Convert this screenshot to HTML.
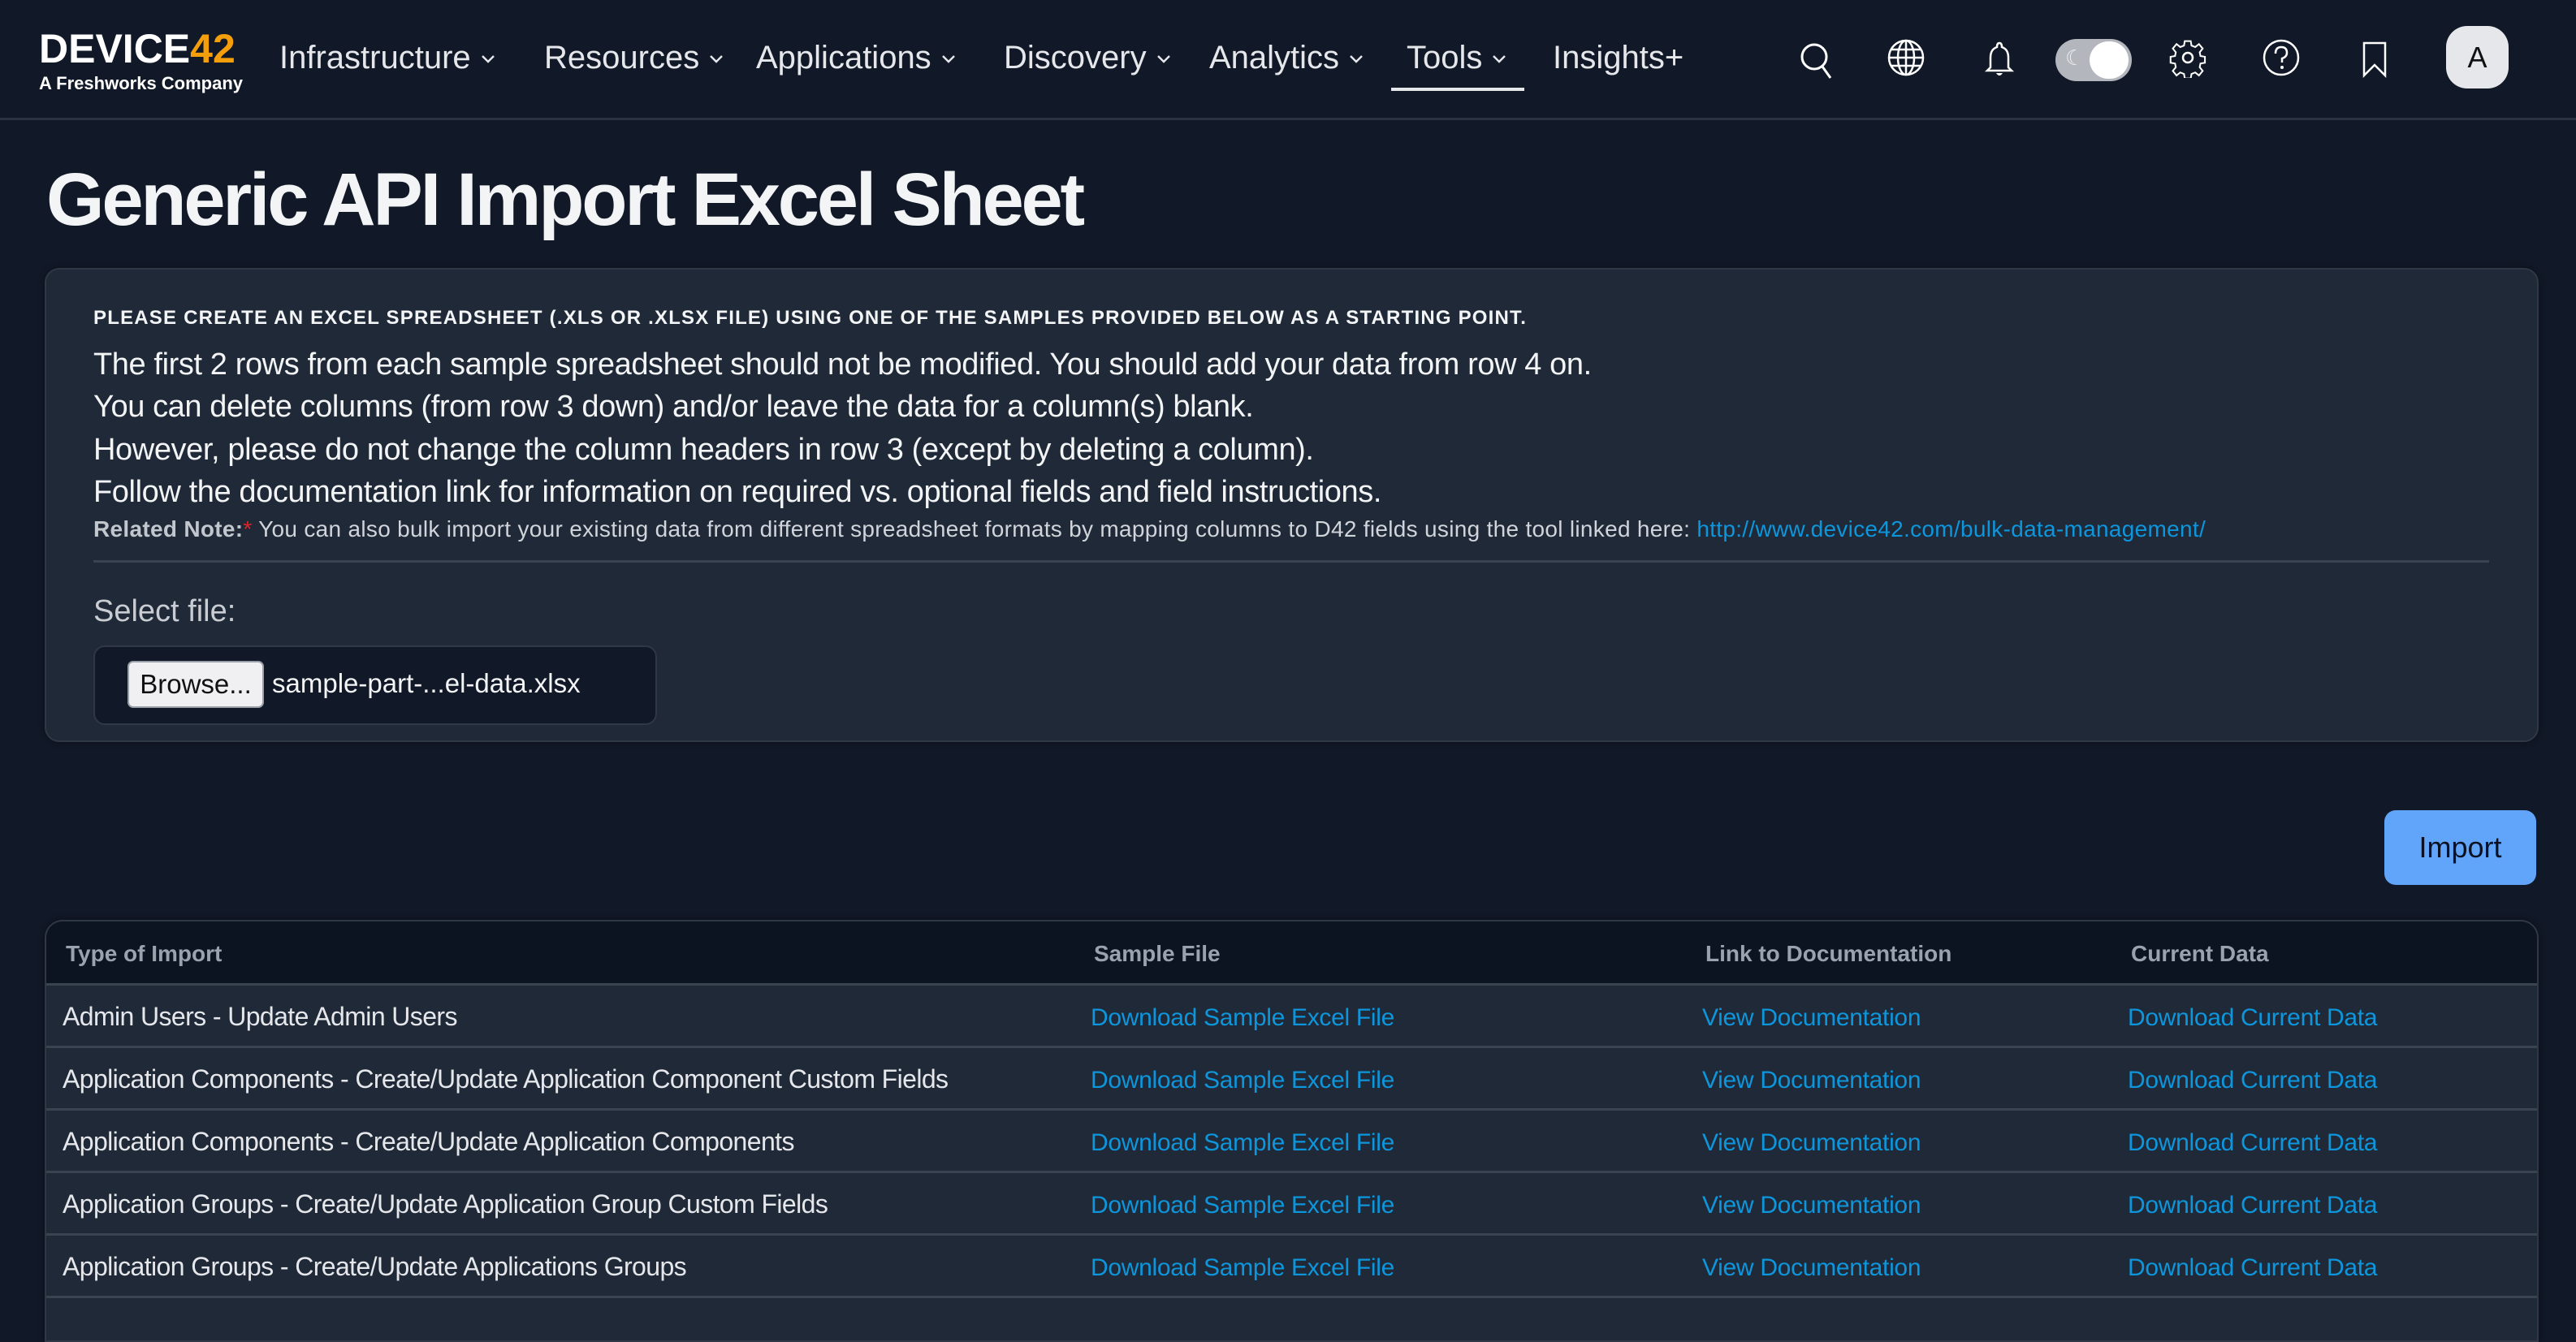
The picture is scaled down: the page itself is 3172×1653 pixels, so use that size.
<!DOCTYPE html>
<html><head><meta charset="utf-8"><style>
*{margin:0;padding:0;box-sizing:border-box}
body{width:3172px;height:1604px;overflow:hidden;background:#111827;font-family:"Liberation Sans",sans-serif;color:#e5e7eb;position:relative}
.a{position:absolute;white-space:nowrap}
.nav{position:absolute;left:0;top:0;width:3172px;height:148px;background:#111827;border-bottom:3px solid #2b3340}
.ni{position:absolute;top:46px;font-size:40px;color:#e5e7eb;line-height:50px}
.ni svg{margin-left:12px;vertical-align:middle}
.ic{position:absolute;top:46px}
.panel{position:absolute;left:55px;top:330px;width:3071px;height:584px;background:#1f2937;border:2px solid #2f3846;border-radius:18px;box-shadow:0 0 8px rgba(0,0,0,.4)}
.p{font-size:38px;color:#f3f4f6;letter-spacing:-0.4px}
a{color:#0e96dc;text-decoration:none}
.tbl{position:absolute;left:55px;top:1133px;width:3071px;height:520px;background:#1f2937;border:2px solid #2f3846;border-radius:22px 22px 0 0;overflow:hidden;box-shadow:0 0 8px rgba(0,0,0,.4)}
.hd{position:absolute;left:0;top:0;width:100%;height:79px;background:#0c1422;border-bottom:3px solid #3a4350}
.th{position:absolute;top:24px;font-size:28px;font-weight:bold;color:#9aa3ad}
.row{position:absolute;left:0;width:100%;height:77px;border-bottom:3px solid #3a4350}
.row span{position:absolute;top:20px;font-size:32px;white-space:nowrap;letter-spacing:-0.6px}
.row span a{font-size:30px;letter-spacing:-0.3px}
</style></head><body>
<div class="nav">
 <div class="a" style="left:48px;top:32px;font-size:50px;font-weight:bold;letter-spacing:0;color:#fff;line-height:56px">DEVICE<span style="color:#f59e0b">42</span></div>
 <div class="a" style="left:48px;top:90px;font-size:22px;font-weight:bold;color:#fff">A Freshworks Company</div>
 <div class="ni" style="left:344px">Infrastructure<svg width="18" height="12"><path d="M2 2l7 7 7-7" stroke="#e5e7eb" stroke-width="2.5" fill="none"/></svg></div>
 <div class="ni" style="left:670px">Resources<svg width="18" height="12"><path d="M2 2l7 7 7-7" stroke="#e5e7eb" stroke-width="2.5" fill="none"/></svg></div>
 <div class="ni" style="left:931px">Applications<svg width="18" height="12"><path d="M2 2l7 7 7-7" stroke="#e5e7eb" stroke-width="2.5" fill="none"/></svg></div>
 <div class="ni" style="left:1236px">Discovery<svg width="18" height="12"><path d="M2 2l7 7 7-7" stroke="#e5e7eb" stroke-width="2.5" fill="none"/></svg></div>
 <div class="ni" style="left:1489px">Analytics<svg width="18" height="12"><path d="M2 2l7 7 7-7" stroke="#e5e7eb" stroke-width="2.5" fill="none"/></svg></div>
 <div class="ni" style="left:1732px">Tools<svg width="18" height="12"><path d="M2 2l7 7 7-7" stroke="#e5e7eb" stroke-width="2.5" fill="none"/></svg></div>
 <div class="a" style="left:1713px;top:108px;width:164px;height:4px;background:#e5e7eb"></div>
 <div class="ni" style="left:1912px">Insights+</div>
 <svg class="ic" style="left:2212px" width="50" height="56" viewBox="0 0 50 56"><circle cx="22" cy="24" r="15" stroke="#fff" stroke-width="3" fill="none"/><path d="M32 36l10 14" stroke="#fff" stroke-width="3"/></svg>
 <svg class="ic" style="left:2322px" width="50" height="50" viewBox="0 0 50 50"><circle cx="25" cy="25" r="21" stroke="#fff" stroke-width="2.5" fill="none"/><ellipse cx="25" cy="25" rx="10" ry="21" stroke="#fff" stroke-width="2.5" fill="none"/><path d="M25 4v42M4 25h42M7 15h36M7 35h36" stroke="#fff" stroke-width="2.5"/></svg>
 <svg class="ic" style="left:2440px;top:50px" width="44" height="48" viewBox="0 0 44 48"><path d="M22 3c-3 0-3 4-3 5-6 2-8 7-8 13v12l-4 4h30l-4-4V21c0-6-2-11-8-13 0-1 0-5-3-5z" stroke="#fff" stroke-width="2.5" fill="none"/><path d="M18 40q4 6 8 0" fill="#fff"/></svg>
 <div class="a" style="left:2531px;top:48px;width:94px;height:52px;border-radius:26px;background:#b3b7bd"><div class="a" style="left:42px;top:3px;width:48px;height:46px;border-radius:24px;background:#fff"></div><div class="a" style="left:12px;top:8px;font-size:26px;color:#eee">☾</div></div>
 <svg class="ic" style="left:2670px" width="48" height="50" viewBox="0 0 48 50"><path d="M20 4h8l1 6 5 2 5-4 5 6-4 5 1 5 6 1v8l-6 1-1 5 4 5-5 6-5-4-5 2-1 6h-8l-1-6-5-2-5 4-5-6 4-5-1-5-6-1v-8l6-1 1-5-4-5 5-6 5 4 5-2z" stroke="#fff" stroke-width="2.2" fill="none" transform="scale(.92) translate(2 1)"/><circle cx="24" cy="25" r="6" stroke="#fff" stroke-width="2.5" fill="none"/></svg>
 <svg class="ic" style="left:2785px" width="48" height="50" viewBox="0 0 48 50"><circle cx="24" cy="25" r="21" stroke="#fff" stroke-width="2.5" fill="none"/><path d="M17 20q0-8 7-8t7 7q0 5-6 7v5" stroke="#fff" stroke-width="2.5" fill="none"/><circle cx="25" cy="37" r="2" fill="#fff"/></svg>
 <svg class="ic" style="left:2908px;top:50px" width="32" height="46" viewBox="0 0 32 46"><path d="M3 3h26v40L16 30 3 43z" stroke="#fff" stroke-width="2.5" fill="none"/></svg>
 <div class="a" style="left:3012px;top:32px;width:77px;height:77px;border-radius:26px;background:#e5e7eb;color:#111;font-size:36px;text-align:center;line-height:77px">A</div>
</div>

<div class="a" style="left:57px;top:194px;font-size:92px;font-weight:bold;color:#f3f4f6;letter-spacing:-3.2px">Generic API Import Excel Sheet</div>

<div class="panel">
 <div class="a" style="left:58px;top:46px;font-size:24px;font-weight:bold;letter-spacing:1.2px;color:#f3f4f6">PLEASE CREATE AN EXCEL SPREADSHEET (.XLS OR .XLSX FILE) USING ONE OF THE SAMPLES PROVIDED BELOW AS A STARTING POINT.</div>
 <div class="a p" style="left:58px;top:96px">The first 2 rows from each sample spreadsheet should not be modified. You should add your data from row 4 on.</div>
 <div class="a p" style="left:58px;top:148px">You can delete columns (from row 3 down) and/or leave the data for a column(s) blank.</div>
 <div class="a p" style="left:58px;top:201px">However, please do not change the column headers in row 3 (except by deleting a column).</div>
 <div class="a p" style="left:58px;top:253px">Follow the documentation link for information on required vs. optional fields and field instructions.</div>
 <div class="a" style="left:58px;top:304px;font-size:28px;letter-spacing:0.3px;color:#d1d5db"><b style="color:#c2c7ce">Related Note:</b><span style="color:#dc2626">*</span> You can also bulk import your existing data from different spreadsheet formats by mapping columns to D42 fields using the tool linked here: <a>http://www.device42.com/bulk-data-management/</a></div>
 <div class="a" style="left:58px;top:358px;width:2950px;height:3px;background:#3a4350"></div>
 <div class="a" style="left:58px;top:400px;font-size:38px;color:#c9cdd3">Select file:</div>
 <div class="a" style="left:58px;top:463px;width:694px;height:98px;background:#111827;border:2px solid #2f3846;border-radius:14px">
  <div class="a" style="left:40px;top:17px;width:168px;height:58px;background:#f0f0f3;border:2px solid #9aa0a8;border-radius:7px;color:#111;font-size:33px;text-align:center;line-height:54px">Browse...</div>
  <div class="a" style="left:218px;top:26px;font-size:33px;color:#f3f4f6">sample-part-...el-data.xlsx</div>
 </div>
</div>

<div class="a" style="left:2936px;top:998px;width:187px;height:92px;background:#60a5fa;border-radius:14px;color:#0b1120;font-size:36px;text-align:center;line-height:92px">Import</div>

<div class="tbl">
 <div class="hd">
  <div class="th" style="left:24px">Type of Import</div>
  <div class="th" style="left:1290px">Sample File</div>
  <div class="th" style="left:2043px">Link to Documentation</div>
  <div class="th" style="left:2567px">Current Data</div>
 </div>
 <div class="row" style="top:79px"><span style="left:20px">Admin Users - Update Admin Users</span><span style="left:1286px"><a>Download Sample Excel File</a></span><span style="left:2039px"><a>View Documentation</a></span><span style="left:2563px"><a>Download Current Data</a></span></div>
 <div class="row" style="top:156px"><span style="left:20px">Application Components - Create/Update Application Component Custom Fields</span><span style="left:1286px"><a>Download Sample Excel File</a></span><span style="left:2039px"><a>View Documentation</a></span><span style="left:2563px"><a>Download Current Data</a></span></div>
 <div class="row" style="top:233px"><span style="left:20px">Application Components - Create/Update Application Components</span><span style="left:1286px"><a>Download Sample Excel File</a></span><span style="left:2039px"><a>View Documentation</a></span><span style="left:2563px"><a>Download Current Data</a></span></div>
 <div class="row" style="top:310px"><span style="left:20px">Application Groups - Create/Update Application Group Custom Fields</span><span style="left:1286px"><a>Download Sample Excel File</a></span><span style="left:2039px"><a>View Documentation</a></span><span style="left:2563px"><a>Download Current Data</a></span></div>
 <div class="row" style="top:387px"><span style="left:20px">Application Groups - Create/Update Applications Groups</span><span style="left:1286px"><a>Download Sample Excel File</a></span><span style="left:2039px"><a>View Documentation</a></span><span style="left:2563px"><a>Download Current Data</a></span></div>
</div>
</body></html>
